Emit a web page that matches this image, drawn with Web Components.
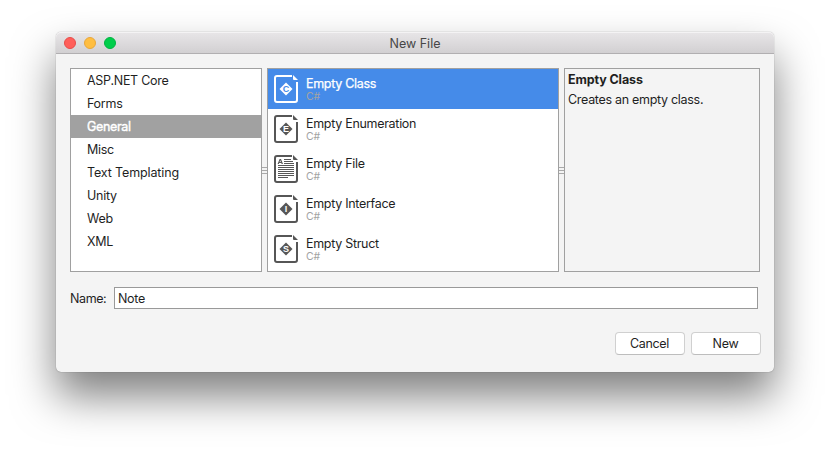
<!DOCTYPE html>
<html lang="en">
<head>
<meta charset="utf-8">
<title>New File</title>
<style>
html, body { margin: 0; height: 100%; background: #fff; overflow: hidden; }
body { font: 12.5px/16px Inter, "Liberation Sans", sans-serif; letter-spacing: -.3px; color: #1f1f1f; }
</style>
</head>
<body>
<new-file-page></new-file-page>
<script>
const define = (name, html) => customElements.define(name, class extends HTMLElement {
  connectedCallback() {
    if (this.shadowRoot) return;
    const t = document.createElement('template');
    t.innerHTML = typeof html === 'function' ? html(this) : html;
    this.attachShadow({ mode: 'open' }).append(t.content.cloneNode(true));
  }
});

define('traffic-lights', `
<style>
:host { display: flex; gap: 8px; }
i { width: 12px; height: 12px; border-radius: 50%; box-sizing: border-box; border: 1px solid; }
.r { background: #ff5f5a; border-color: #e84c49; }
.y { background: #ffbe41; border-color: #e9a73a; }
.g { background: #00ce4b; border-color: #00b341; }
</style><i class="r"></i><i class="y"></i><i class="g"></i>`);

define('title-bar', `
<style>
:host { display: grid; grid-template-columns: 1fr auto 1fr; align-items: center; height: 21px; flex: none;
  padding: 0 8px; background: linear-gradient(#e8e6e8, #d2d0d2); border-bottom: 1px solid #b1afb1;
  box-shadow: inset 0 1px #f4f3f4; border-radius: 5px 5px 0 0; color: #474747; }
span { letter-spacing: 0; padding-top: 2px; }
</style><traffic-lights></traffic-lights><span><slot></slot></span><b></b>`);

define('category-item', `
<style>
:host { display: flex; align-items: center; height: 23px; padding: 0 0 0 16px; box-sizing: border-box; letter-spacing: -.27px; }
:host([loose]) { letter-spacing: -.13px; }
:host([selected]) { background: #a1a1a1; color: #fff; -webkit-text-stroke: .4px #fff; letter-spacing: -.35px; }
</style><slot></slot>`);

define('list-panel', `
<style>
:host { display: block; box-sizing: border-box; height: 204px; border: 1px solid #a0a0a0; background: #fff; }
:host([plain]) { background: #f4f4f4; }
</style><slot></slot>`);

define('split-grip', `
<style>
:host { display: flex; width: 5px; flex-direction: column; justify-content: center; gap: 2px; }
i { height: 1px; background: #a9a9a9; }
</style><i></i><i></i><i></i>`);

const textLines = `<path d="M3.600 9 5.600 4h1.400L9 9H7.600l-.3-1H5.200l-.3 1zM5.600 7h1.300l-.6-1.700z" fill="currentColor"/>
  <path d="M10 4.500h7M10 6.500h9M10 8.500h10M4 10.500h16M4 12.500h16M4 14.500h16M4 16.500h16M4 18.500h16M4 20.500h16M4 22.500h10" stroke="currentColor"/>`;
define('file-icon', el => `
<style>
:host { display: block; width: 24px; height: 28px; position: relative; }
svg { display: block; }
b { position: absolute; inset: 7px 0 0; text-align: center; letter-spacing: 0; font: bold 9px/14px "Liberation Sans", sans-serif; color: var(--icon-bg, #fff); }
</style>
<svg width="24" height="28" viewBox="0 0 24 28" fill="none">
<path d="M18 1H3Q1 1 1 3V25Q1 27 3 27H21Q23 27 23 25V7" stroke="currentColor" stroke-width="2"/>
<path d="M19 0L24 5H20Q19 5 19 4Z" fill="currentColor"/>
${el.hasAttribute('letter') ? '<path d="M12 7.500 18.500 14 12 20.500 5.500 14Z" fill="currentColor"/>' : textLines}
</svg>${el.hasAttribute('letter') ? `<b>${el.getAttribute('letter')}</b>` : ''}`);

define('template-item', el => `
<style>
:host { display: flex; gap: 8px; height: 40px; box-sizing: border-box; padding: 6px 0 0 6px; }
:host([selected]) { background: #458be9; color: #fff; --icon-bg: #458be9; }
file-icon { color: #565656; }
:host([selected]) file-icon { color: #fff; }
:host([selected]) .n { -webkit-text-stroke: .25px #fff; }
.n { line-height: 16px; margin-top: 1px; }
.l { font-size: 10.5px; line-height: 10px; color: #a3a3a3; letter-spacing: -.2px; }
</style>
<file-icon ${el.hasAttribute('letter') ? `letter="${el.getAttribute('letter')}"` : ''}></file-icon>
<div><div class="n"><slot></slot></div><div class="l">C#</div></div>`);

define('detail-text', `
<style>
:host { display: block; padding: 3px 3px; }
::slotted(*) { display: block; margin: 0 0 4px; }
::slotted(strong) { letter-spacing: -.12px; }
</style><slot></slot>`);

define('name-field', `
<style>
:host { display: flex; align-items: center; gap: 8px; height: 22px; margin: 15px 3px 0 0; }
label { width: 36px; white-space: nowrap; padding-top: 2px; letter-spacing: -.4px; }
div { flex: 1; height: 22px; box-sizing: border-box; border: 1px solid #999; background: #fff; padding: 3px 3px 1px; }
</style><label>Name:</label><div><slot></slot></div>`);

define('push-button', `
<style>
:host { display: flex; align-items: center; justify-content: center; box-sizing: border-box; width: 70px; height: 23px; padding-right: 1px;
  background: #fff; border: 1px solid #d0d0d0; border-bottom-color: #bdbdbd; border-radius: 4px; }
</style><slot></slot>`);

define('dialog-window', `
<style>
:host { display: flex; flex-direction: column; width: 718px; height: 340px; background: #f4f4f4; border-radius: 5px;
  box-shadow: 0 0 1px rgba(0,0,0,.5), 0 24px 43px rgba(0,0,0,.5); }
main { padding: 14px 13px 0 14px; }
.panes { display: grid; grid-template-columns: 192px 5px 292px 5px 196px; }
.actions { display: flex; justify-content: flex-end; gap: 6px; margin-top: 23px; }
</style>
<title-bar>New File</title-bar>
<main>
<div class="panes">
<list-panel><category-item>ASP.NET Core</category-item><category-item>Forms</category-item><category-item selected>General</category-item><category-item>Misc</category-item><category-item loose>Text Templating</category-item><category-item>Unity</category-item><category-item>Web</category-item><category-item>XML</category-item></list-panel>
<split-grip></split-grip>
<list-panel><template-item letter="C" selected>Empty Class</template-item><template-item letter="E">Empty Enumeration</template-item><template-item>Empty File</template-item><template-item letter="I">Empty Interface</template-item><template-item letter="S">Empty Struct</template-item></list-panel>
<split-grip></split-grip>
<list-panel plain><detail-text><strong>Empty Class</strong><span>Creates an empty class.</span></detail-text></list-panel>
</div>
<name-field>Note</name-field>
<div class="actions"><push-button>Cancel</push-button><push-button>New</push-button></div>
</main>`);

define('new-file-page', `
<style>:host { display: block; padding: 32px 56px; }</style><dialog-window></dialog-window>`);
</script>
</body>
</html>
